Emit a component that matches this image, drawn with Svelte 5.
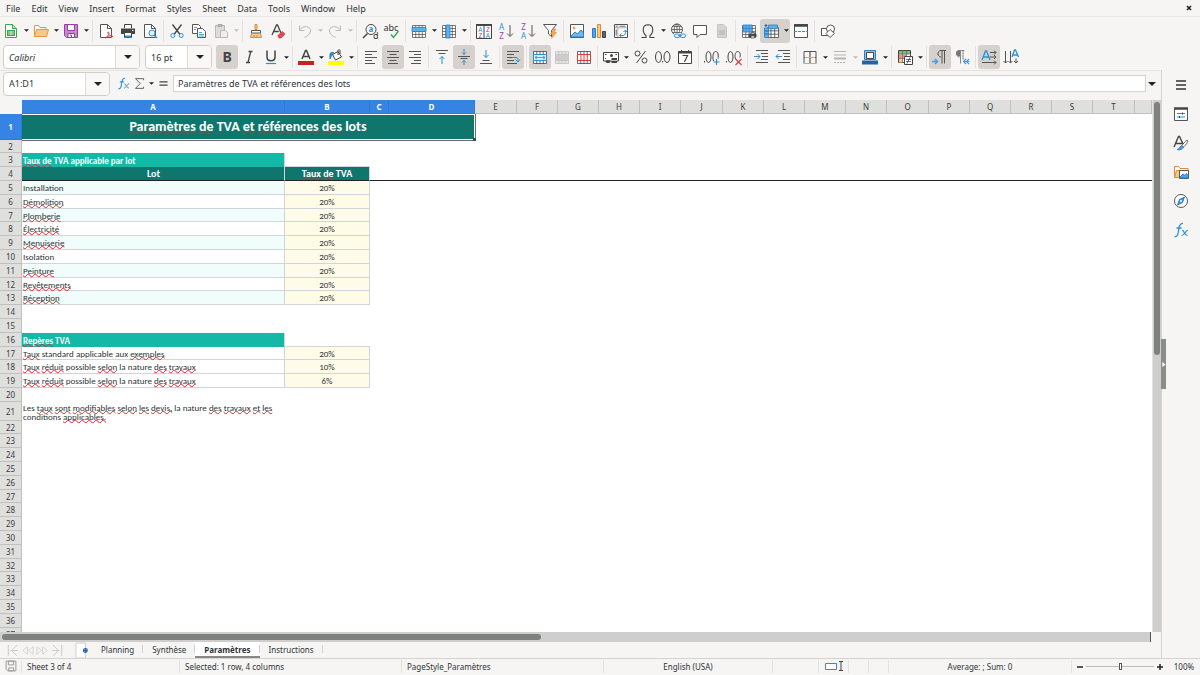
<script lang="ts">
	type Tool = { icon: string; label: string; menu?: boolean; active?: boolean; disabled?: boolean };
	type Row = { kind?: string; label?: string; rate?: string };

	const menus = ['File', 'Edit', 'View', 'Insert', 'Format', 'Styles', 'Sheet', 'Data', 'Tools', 'Window', 'Help'];

	const grid = 'M1.5 2.5h13v12h-13zM1.5 5.5h13M1.5 8.5h13M1.5 11.5h13M4.75 2.5v12M8 2.5v12M11.25 2.5v12';

	const icons: Record<string, string> = {
		new: '<path d="M2.5 1.5h7l4 4v9h-11z" fill="#fff" stroke="#3fa64b"/><path d="M9.5 1.5v4h4" fill="#b8e6bd" stroke="#3fa64b"/><path d="M4 7h8v6H4z" fill="#3fa64b"/><path d="M5 9h6M5 11h6M8 8v4" stroke="#fff" stroke-width=".7"/>',
		open: '<path d="M1.5 13.5v-11h4l1.5 2h6v2" fill="#fff" stroke="#e8973a"/><path d="M1.5 13.5l2-7h12l-2 7z" fill="#fbc983" stroke="#e8973a"/>',
		save: '<path d="M1.5 1.5h13v13h-11l-2-2z" fill="#c987d2" stroke="#963fa5"/><path d="M4.5 1.5h7v6h-7z" fill="#fff" stroke="#963fa5"/><path d="M5 10.5h6.5v4H5z" fill="#fff" stroke="#963fa5"/><path d="M7 12h1.5v2" stroke="#963fa5"/>',
		pdf: '<path d="M2.5 1.5h7l4 4v9h-11z" fill="#fff" stroke="#555"/><path d="M9.5 1.5v4h4" stroke="#555"/><path d="M7.5 15c3-2 4-5 3-6-1.5-.5-.5 4 4.5 4.5-3-1.500-6 0-7.500 1.500z" stroke="#e0404b"/>',
		print: '<path d="M4.5 5V1.5h7V5" fill="#fff" stroke="#444"/><path d="M1 5.5h14V11H1z" fill="#444"/><path d="M4.5 9.5h7v5h-7z" fill="#fff" stroke="#444"/><path d="M5 13.5h6" stroke="#2b8fd6" stroke-width="2"/><path d="M12 7.5h1.5" stroke="#fff"/>',
		preview: '<path d="M2.5 1.5h7l4 4v9h-11z" fill="#fff" stroke="#555"/><path d="M9.5 1.5v4h4" stroke="#555"/><circle cx="10" cy="10" r="3" fill="#dff0fb" stroke="#2b8fd6"/><path d="M12 12l3 3" stroke="#2b8fd6" stroke-width="1.4"/>',
		cut: '<path d="M3.5 1.5l7.5 10M12.5 1.5L5 11.5" stroke="#444" stroke-width="1.3"/><circle cx="3.8" cy="12.5" r="2" stroke="#2b8fd6"/><circle cx="12.2" cy="12.5" r="2" stroke="#2b8fd6"/>',
		copy: '<path d="M1.5 1.5h6l2 2v7h-8z" fill="#fff" stroke="#555"/><path d="M6.5 5.5h5l3 3v6h-8z" fill="#fff" stroke="#555"/><path d="M3 4.5h3M3 6.5h2M8 9.5h3M8 11.5h5M8 13h5" stroke="#2b8fd6" stroke-width=".8"/>',
		paste: '<path d="M2.5 2.5h9v12h-9z" fill="#ddd" stroke="#b8b8b8"/><path d="M5 1.5h4v2H5z" fill="#bbb" stroke="#aaa"/><path d="M7.5 7.5h5l2 2v5h-7z" fill="#eee" stroke="#b8b8b8"/>',
		clone: '<path d="M7 1.5h2V7H7z" fill="#fbc983" stroke="#e08a35"/><path d="M3.5 7.5h9V10h-9z" fill="#fff" stroke="#555"/><path d="M3.5 10.5h9l1 4h-11z" fill="#fbc983" stroke="#e08a35"/><path d="M6 12v2M9 12v2" stroke="#e08a35"/>',
		clear: '<path d="M2 12L6.5 2h1l3.5 8M3.8 8.5h5" stroke="#444" stroke-width="1.3"/><path d="M8 12.500l4-4 3 2.500-4 4H9z" fill="#e8474f" stroke="#c93640" stroke-width=".8"/>',
		undo: '<path d="M2.5 2.5v5h5M2.5 7C6 2 14 3 13.5 8c-.2 3-3 5-6 6.5" stroke="#b9b9b9"/>',
		redo: '<path d="M13.5 2.5v5h-5M13.5 7C10 2 2 3 2.5 8c.2 3 3 5 6 6.5" stroke="#b9b9b9"/>',
		find: '<circle cx="9" cy="6.5" r="5" fill="#fff" stroke="#444"/><path d="M5.5 10.5L1 15" stroke="#444" stroke-width="1.5"/><text x="6.5" y="9" font-size="8" font-weight="700" fill="#2b8fd6">a</text><text x="11" y="15.5" font-size="9" fill="#333">d</text>',
		spell: '<text x="-.5" y="8" font-size="9" fill="#333">abc</text><path d="M7 11.5l2.5 3 5-6.5" stroke="#2fa84f" stroke-width="1.4"/>',
		row: `<path d="${grid}" fill="#fff" stroke="#555" stroke-width=".8"/><path d="M1 4.5h14v4H1z" fill="#5fb0ec" stroke="#2b7fc6" stroke-width=".8"/>`,
		column: `<path d="${grid}" fill="#fff" stroke="#555" stroke-width=".8"/><path d="M5 2h4v13H5z" fill="#5fb0ec" stroke="#2b7fc6" stroke-width=".8"/>`,
		sort: '<path d="M.5 1.5h15v14H.5zM8 3v12" fill="#fff" stroke="#444"/><path d="M0 2h16" stroke="#444" stroke-width="2"/><g font-size="6.5"><text x="2.2" y="8.800" fill="#2b8fd6">A</text><text x="2.4" y="14.6" fill="#a03fa8">Z</text><text x="10" y="8.800" fill="#a03fa8">Z</text><text x="9.8" y="14.6" fill="#2b8fd6">A</text></g>',
		asc: '<g font-size="8"><text x="1" y="7" fill="#2b8fd6">A</text><text x="1.2" y="15.5" fill="#a03fa8">Z</text></g><path d="M12 2v11M9 10.5l3 3 3-3" stroke="#555"/>',
		desc: '<g font-size="8"><text x="1.2" y="7" fill="#a03fa8">Z</text><text x="1" y="15.5" fill="#2b8fd6">A</text></g><path d="M12 2v11M9 10.5l3 3 3-3" stroke="#555"/>',
		filter: '<path d="M1.5 1.5h13l-5 6v6l-3-2.5V7.5z" fill="#fff" stroke="#555"/><path d="M12 6L8.5 11H11l-1.5 4.5L14.5 9.5H12L14 6z" fill="#fba93f" stroke="#e08a35" stroke-width=".6"/>',
		image: '<path d="M1.5 1.5h13v13h-13z" fill="#fff" stroke="#555"/><circle cx="5" cy="5" r="1.5" fill="#f8a33c"/><path d="M2 13l4-4 2.5 2L12 7l2.5 3v4H2z" fill="#73b8ee" stroke="#2b7fc6"/>',
		chart: '<path d="M1.5 5.5h3v9h-3z" fill="#4fa5e6" stroke="#2b7fc6"/><path d="M6.5 1.5h3v13h-3z" fill="#fbc983" stroke="#e08a35"/><path d="M11.5 8.5h3v6h-3z" fill="#666" stroke="#444"/>',
		pivot: '<path d="M1.5 1.5h13v13h-13z" fill="#fff" stroke="#555"/><path d="M4.8 2v12M2 4.8h12" stroke="#999" stroke-width=".8"/><path d="M7 12.5h3c2 0 2.500-2 2.500-5M10.500 9l2-2 1.500 2M8.500 10.500L6.500 12.500l2 1.500" stroke="#2b8fd6"/><path d="M2.500 3.200h1.500M6.500 3.200h6M3.200 6.500v6" stroke="#666"/>',
		omega: '<path d="M1.5 14.5H6v-2C2.500 10 1.500 2 8 1.800c6.500.2 5.500 8.200 2 10.700v2h4.500" stroke="#444" stroke-width="1.1"/>',
		link: '<circle cx="7" cy="6.5" r="5.5" stroke="#555"/><path d="M1.5 6.5h11M7 1v11M2.5 3.5h9M2.5 9.5h9" stroke="#555" stroke-width=".8"/><ellipse cx="7" cy="6.5" rx="2.7" ry="5.5" stroke="#555" stroke-width=".8"/><path d="M4 10h12v5.5H4z" fill="#f6f5f4"/><rect x="4.5" y="11" width="5.5" height="3.5" rx="1.7" stroke="#2b8fd6"/><rect x="10" y="11" width="5.5" height="3.5" rx="1.7" stroke="#2b8fd6"/><path d="M8 12.7h4" stroke="#2b8fd6"/>',
		comment: '<path d="M1.5 2.5h13v9H8l-3 3v-3H1.5z" fill="#fff" stroke="#555"/>',
		headers: '<path d="M3.5 1.5h6l3 3v10h-9z" fill="#d4d4d4" stroke="#c4c4c4"/><path d="M5 7h6v5H5z" fill="#c2c2c2"/>',
		printarea: `<path d="${grid}" fill="#fff" stroke="#555" stroke-width=".8"/><path d="M2 2h9v7H2z" fill="#5fb0ec" stroke="#2b7fc6" stroke-width=".8"/><path d="M2 5.5h9M5 2v7M8 2v7" stroke="#2b7fc6" stroke-width=".7"/><path d="M8 11h7v3H8z" fill="#555" stroke="#333" stroke-width=".8"/><path d="M10 9.5h3.5V11H10zM10 13h3.5v2H10z" fill="#fff" stroke="#444" stroke-width=".7"/>`,
		freeze: '<path d="M4.5 4.5h11v10h-11zM4.5 7.8h11M4.5 11.2h11M8 4.5v10M11.7 4.5v10" fill="#fff" stroke="#444" stroke-width=".8"/><path d="M1.5 5h4v9.5h-4zM5.5 2h9v3.5h-9z" fill="#5fb0ec" stroke="#2b7fc6" stroke-width=".8"/><path d="M3 1v3M1.5 2.5h3M1.5 8h4M1.5 11h4" stroke="#1769aa"/>',
		split: '<path d="M1.5 1.5h13v13h-13z" fill="#fff" stroke="#555"/><path d="M1 2.5h14" stroke="#444" stroke-width="2.5"/><path d="M1 8.5h14" stroke="#2b8fd6" stroke-dasharray="3 1"/>',
		shapes: '<path d="M1.5 5.5h8v7h-8z" fill="#fff" stroke="#555"/><circle cx="10.5" cy="6" r="4" fill="#fff" stroke="#555"/><path d="M10 6.5l4.5 4-4.5 4-4-4z" fill="#fff" stroke="#555"/>',
		bold: '<text x="3.5" y="13" font-size="14" font-weight="700" fill="#444">B</text>',
		italic: '<path d="M7.500 2.500h4M5 13.500h4M9.700 2.500l-2.700 11" stroke="#444" stroke-width="1.3"/>',
		underline: '<path d="M4 1.5V8c0 5 8 5 8 0V1.5" stroke="#444" stroke-width="1.5"/><path d="M3 14.5h10" stroke="#2b8fd6" stroke-width="1.2"/>',
		fontcolor: '<path d="M4 10l3.500-8.500h1L12 10M5.200 7.500h5.600" stroke="#444" stroke-width="1.5"/><path d="M0 12h16v4H0z" fill="#c9211e"/>',
		highlight: '<path d="M4.500 5.500l5.500-3 3.500 5.500-6 3z" fill="#fff" stroke="#444"/><path d="M10 6V1.500c0-1 2-1 2 0V5" stroke="#444"/><path d="M2 10V4.500c1-1 2.500-1.500 4-.5-1.500.5-2.500 2.500-4 6z" fill="#2b8fd6" stroke="#2b7fc6"/><path d="M0 12h16v4H0z" fill="#ffff00"/>',
		left: '<path d="M2 2.5h12M2 5.5h7M2 8.5h12M2 11.5h7M2 14.5h10" stroke="#555"/>',
		center: '<path d="M2 2.5h12M4.5 5.5h7M2 8.5h12M4.5 11.5h7M3 14.5h10" stroke="#555"/>',
		right: '<path d="M2 2.5h12M7 5.5h7M2 8.5h12M7 11.5h7M4 14.5h10" stroke="#555"/>',
		top: '<path d="M2 1.5h12M4.5 4.5h7" stroke="#555"/><path d="M8 15V7.5M5.5 10L8 7.5l2.5 2.5" stroke="#2b8fd6"/>',
		middle: '<path d="M2 7.5h12M4.5 9.5h7" stroke="#555"/><path d="M8 0v5.5M6 3.5l2 2 2-2M8 16v-4.5M6 13.5l2-2 2 2" stroke="#2b8fd6"/>',
		bottom: '<path d="M4.5 11.5h7M2 14.5h12" stroke="#555"/><path d="M8 1v7.5M5.5 6L8 8.5 10.5 6" stroke="#2b8fd6"/>',
		wrap: '<path d="M2 2.5h12M2 5.5h7M2 8.5h5M2 11.5h7M2 14.5h10" stroke="#555"/><path d="M7 8.5h4c2 0 2 1 2 3.5M10.5 10.5l2.5 2.5 2-2.5" stroke="#2b8fd6"/>',
		merge: `<path d="${grid}" fill="#fff" stroke="#444" stroke-width=".8"/><path d="M1.5 5.5h13v6h-13z" fill="#d7ecfb" stroke="#2b8fd6"/><path d="M3 8.5h10M5 7L3 8.5 5 10M11 7l2 1.5-2 1.5" stroke="#2b8fd6" stroke-width=".8"/>`,
		mergeoff: `<path d="${grid}" fill="#e6e6e6" stroke="#c0c0c0" stroke-width=".8"/><path d="M2 6h12v5H2z" fill="#ccc"/>`,
		unmerge: `<path d="${grid}" fill="#fff" stroke="#444" stroke-width=".8"/><path d="M1.5 5.5h13v6h-13zM5 5.5v6M8 5.5v6M11.3 5.5v6" fill="#fff" stroke="#dd3b40"/>`,
		currency: '<path d="M.5 3.500h15v8.500H.5z" fill="#fff" stroke="#444"/><circle cx="8.500" cy="6.500" r="1.500" fill="#444"/><path d="M2 5.500h1.500M12.500 5.500h1.500M2 9.500h1" stroke="#444"/><ellipse cx="5" cy="12.500" rx="2.500" ry="1.500" fill="#444"/><path d="M8.500 9h5.500v5H8.500z" fill="#444"/><path d="M8.500 11.500H14" stroke="#fff" stroke-width=".7"/>',
		percent: '<circle cx="4.5" cy="4.5" r="2.5" stroke="#444"/><circle cx="11.5" cy="11.5" r="2.5" stroke="#444"/><path d="M12.5 2l-9 12" stroke="#444"/>',
		number: '<ellipse cx="3.5" cy="8" rx="3" ry="5.5" stroke="#444"/><ellipse cx="12" cy="8" rx="3" ry="5.5" stroke="#444"/><path d="M7.700 12v1.500" stroke="#444"/>',
		date: '<path d="M1.5 2.5h13v12h-13z" fill="#fff" stroke="#444"/><path d="M1.5 3.5h13" stroke="#444" stroke-width="2"/><path d="M4.5 1v3M11.5 1v3" stroke="#444"/><path d="M5.5 6.5h5L7.5 13" stroke="#444" stroke-width="1.2"/>',
		adddec: '<path d="M.5 12v1.5" stroke="#444"/><ellipse cx="4.5" cy="8" rx="2.5" ry="5.5" stroke="#444"/><path d="M9.500 12c-1-3-1-9 2-9.500 3 0 3 4 2.500 7" stroke="#444"/><path d="M12.5 10v6M9.5 13h6" stroke="#2b8fd6" stroke-width="1.2"/>',
		deldec: '<path d="M.5 12v1.5" stroke="#444"/><ellipse cx="4.5" cy="8" rx="2.5" ry="5.5" stroke="#444"/><path d="M9.500 10c-1-3-.5-7 2-7.500 3 0 3 4 2.500 6" stroke="#444"/><path d="M9.5 10l6 6M15.5 10l-6 6" stroke="#dd3b40" stroke-width="1.2"/>',
		indent: '<path d="M3 1.5h12M8 4.5h7M9 7.5h6M8 10.5h7M3 13.5h12" stroke="#555"/><path d="M1 7.5h6M4.5 5L7 7.5 4.5 10" stroke="#2b8fd6"/>',
		outdent: '<path d="M3 1.5h12M8 4.5h7M9 7.5h6M8 10.5h7M3 13.5h12" stroke="#555"/><path d="M1 7.5h6M3.5 5L1 7.5 3.5 10" stroke="#2b8fd6"/>',
		borders: '<path d="M8 2.500v12M2 8.500h12M2 14.500h12" stroke="#e8a45c"/><path d="M2 14.500v-12h12v12M8 3v11M2 8.500h12" stroke="#555"/><path d="M3 8.500h10M2 14.500h12" stroke="#e8a45c"/>',
		linestyle: '<path d="M2 2.5h12M2 6h12" stroke="#b5b5b5"/><path d="M2 9.5h12" stroke="#b5b5b5" stroke-width="2"/><path d="M2 13.5h12" stroke="#b5b5b5" stroke-dasharray="2 1"/>',
		bordercolor: '<path d="M2.5 1.5h11v9h-11z" fill="#8cc4f0" stroke="#2b7fc6"/><path d="M4.5 3.5h7v6h-7z" fill="#fff" stroke="#444"/><path d="M0 11.5h16v4H0z" fill="#2165a8"/>',
		conditional: '<path d="M1.5 1.5h12v12h-12z" fill="#fff" stroke="#444"/><path d="M2 2h11v3H2z" fill="#6cc878"/><path d="M2 5.5h3.5v4H2zM6 5.5h3.5v4H6z" fill="#f28a80"/><path d="M2 10h3.5v3.5H2z" fill="#fbc983"/><path d="M1.5 5h12M1.5 9.5h12M5.5 1.5v12M9.5 1.5v12" stroke="#666" stroke-width=".7"/><path d="M7.5 7.5h8v8h-8z" fill="#fff" stroke="#444"/><path d="M9 10.5h5M9 12.5h5M13 8.5l-3 6" stroke="#444" stroke-width=".8"/>',
		ltr: '<path d="M14 1.500H9c-4 0-4 6.500 0 6.500M10 1.500v13M12.500 1.500v13" stroke="#555"/><path d="M6.800 3c-1 1-1 3 0 4" stroke="#777"/><path d="M0 12.500h5M3 10l2.500 2.500L3 15" stroke="#4a9be8" stroke-width="1.5"/>',
		rtl: '<path d="M10.5 1.5h-5c-4 0-4 6.5 0 6.5M6.5 1.5v13M9 1.5v9" stroke="#888"/><path d="M2 4c0-2 2-3 4-2.500v6C4 7.500 2 6 2 4z" fill="#777"/><path d="M10 12.5h5.5M12 10l-2.5 2.5L12 15M15 10l-2.5 2.5L15 15" stroke="#4a9be8" stroke-width="1.2"/>',
		horizontal: '<path d="M1 11L4.5 2h1L9 11M2.3 8h5.4" stroke="#2b8fd6" stroke-width="1.3"/><path d="M9 3.5h6M9 8h6M1 13.5h14M13 1.5l2 2-2 2M13 6l2 2-2 2M13 11.5l2 2-2 2" stroke="#555"/>',
		vertical: '<path d="M9 8L11.5 1h1L15.5 8M10 6h4.5" stroke="#2b8fd6" stroke-width="1.3"/><path d="M2.5 2v12M7.5 2v12M13 9.5V14M.5 12l2 2 2-2M5.5 12l2 2 2-2M11 12l2 2 2-2" stroke="#555"/>',
		menu: '<path d="M3 4h10M3 8h10M3 12h10" stroke="#333" stroke-width="1.5"/>',
		properties: '<path d="M1.5 2.5h13v12h-13z" fill="#fff" stroke="#555"/><path d="M1 2.5h14" stroke="#444" stroke-width="2.5"/><path d="M4 7.500h8M4 11h8" stroke="#2b8fd6"/><path d="M9.500 6.500v2M6.500 10v2" stroke="#444"/>',
		styles: '<path d="M1 12L5.5 1.5h1L10 9M3 8.5h6" stroke="#444" stroke-width="1.4"/><path d="M14.5 5.5c1 1-2 5-4.5 7l-1.500-1.500c2-2.500 5-6.500 6-5.500z" fill="#fff" stroke="#555"/><path d="M4 14.500c3 0 2-3 4.500-3.500 1.500 0 2 1.500 1 2.500-1.500 1.500-4 1.500-5.500 1z" fill="#4fa5e6" stroke="#2b7fc6"/>',
		gallery: '<path d="M1.5 13.5v-11h4l1.5 2h8v3" fill="#fff" stroke="#e08a35"/><path d="M1.5 13.5l2-7h3v7z" fill="#fbc983" stroke="#e08a35"/><path d="M6.5 6.5h9v8h-9z" fill="#fff" stroke="#555"/><path d="M7 13l3-3 2 1.500 1.500-2 1.500 2V14H7z" fill="#4fa5e6" stroke="#2b7fc6"/>',
		navigator: '<circle cx="8" cy="8" r="6.5" fill="#fff" stroke="#555"/><path d="M11.500 4L9.500 9.500 4.500 12l2-5.500z" fill="#3d9be0" stroke="#1769aa" stroke-width=".8"/><circle cx="8" cy="8" r="1" fill="#fff"/>',
		fx: '<path d="M1.5 14.5c3 .5 3.5-2 4-5.5C6 5.500 6.500 1 10 1.500M3.500 6h5" stroke="#2b8fd6" stroke-width="1.3"/><path d="M9 8.500c2-1 2.500 5.500 5.500 5M15 8.500c-2-1-4 5.500-6.500 5" stroke="#2b8fd6" stroke-width="1.2"/>',
		sum: '<path d="M13 4V2H3l6 6-6 6h10v-2" stroke="#555" stroke-width="1.1"/>',
		equals: '<path d="M3 6h10M3 10h10" stroke="#444" stroke-width="1.8"/>',
		first: '<path d="M3.5 2v12M13 2L7 8l6 6M6 8h8" stroke="#c8c8c8"/>',
		prev: '<path d="M8 4L3 8l5 4zM14 4L9 8l5 4z" stroke="#d2d2d2"/>',
		next: '<path d="M2 4l5 4-5 4zM8 4l5 4-5 4z" stroke="#d2d2d2"/>',
		last: '<path d="M12.5 2v12M3 2l6 6-6 6M2 8h8" stroke="#c8c8c8"/>',
		addsheet: '<path d="M0 0h10v16H0z" fill="#fff" stroke="#ccc"/><circle cx="10" cy="8" r="2" fill="#fff" stroke="#1b5fae" stroke-width="1.2"/><path d="M10 6v4M8 8h4" stroke="#1b5fae"/>',
		disk: '<path d="M1.5 1.5h13v13h-11l-2-2zM4.5 1.5h7v5h-7zM5 10.5h6.5v4H5z" stroke="#999" stroke-width="1.3"/>'
	};

	const t = (icon: string, label: string, rest: Partial<Tool> = {}): Tool => ({ icon, label, ...rest });
	const menu = { menu: true };
	const active = { active: true };

	const standardBar: Tool[][] = [
		[t('new', 'New', menu), t('open', 'Open', menu), t('save', 'Save', menu)],
		[t('pdf', 'Export as PDF'), t('print', 'Print'), t('preview', 'Print Preview')],
		[t('cut', 'Cut'), t('copy', 'Copy'), t('paste', 'Paste', { menu: true, disabled: true })],
		[t('clone', 'Clone Formatting'), t('clear', 'Clear Formatting')],
		[t('undo', 'Undo', { menu: true, disabled: true }), t('redo', 'Redo', { menu: true, disabled: true })],
		[t('find', 'Find and Replace'), t('spell', 'Spelling')],
		[t('row', 'Row', menu), t('column', 'Column', menu)],
		[t('sort', 'Sort'), t('asc', 'Sort Ascending'), t('desc', 'Sort Descending'), t('filter', 'AutoFilter')],
		[t('image', 'Insert Image'), t('chart', 'Insert Chart'), t('pivot', 'Pivot Table')],
		[t('omega', 'Special Character', menu), t('link', 'Hyperlink'), t('comment', 'Comment'), t('headers', 'Headers and Footers', { disabled: true })],
		[t('printarea', 'Define Print Area'), t('freeze', 'Freeze Rows and Columns', { menu: true, active: true }), t('split', 'Split Window')],
		[t('shapes', 'Draw Functions')]
	];

	const formatBar: Tool[][] = [
		[t('bold', 'Bold', active), t('italic', 'Italic'), t('underline', 'Underline', menu)],
		[t('fontcolor', 'Font Color', menu), t('highlight', 'Background Color', menu)],
		[t('left', 'Align Left'), t('center', 'Center Horizontally', active), t('right', 'Align Right')],
		[t('top', 'Align Top'), t('middle', 'Center Vertically', active), t('bottom', 'Align Bottom')],
		[t('wrap', 'Wrap Text', active)],
		[t('merge', 'Merge and Center', active), t('mergeoff', 'Merge Cells', { disabled: true }), t('unmerge', 'Unmerge Cells')],
		[t('currency', 'Currency', menu), t('percent', 'Percent'), t('number', 'Number'), t('date', 'Date')],
		[t('adddec', 'Add Decimal Place'), t('deldec', 'Delete Decimal Place')],
		[t('indent', 'Increase Indent'), t('outdent', 'Decrease Indent')],
		[t('borders', 'Borders', menu), t('linestyle', 'Border Style', { menu: true, disabled: true }), t('bordercolor', 'Border Color', menu)],
		[t('conditional', 'Conditional', menu)],
		[t('ltr', 'Left-To-Right', active), t('rtl', 'Right-To-Left')],
		[t('horizontal', 'Text Horizontal', active), t('vertical', 'Text Vertical')]
	];

	const panels: Tool[] = [
		t('menu', 'Sidebar Settings'),
		t('properties', 'Properties'),
		t('styles', 'Styles'),
		t('gallery', 'Gallery'),
		t('navigator', 'Navigator'),
		t('fx', 'Functions')
	];

	const columns = 'ABCDEFGHIJKLMNOPQRSTU'.split('');
	const lots = ['Installation', 'Démolition', 'Plomberie', 'Électricité', 'Menuiserie', 'Isolation', 'Peinture', 'Revêtements', 'Réception'];

	const cells: Record<number, Row> = {
		3: { kind: 'section', label: 'Taux de TVA applicable par lot' },
		4: { kind: 'heading', label: 'Lot', rate: 'Taux de TVA' },
		16: { kind: 'section', label: 'Repères TVA' },
		17: { kind: 'item', label: 'Taux standard applicable aux exemples', rate: '20%' },
		18: { kind: 'item', label: 'Taux réduit possible selon la nature des travaux', rate: '10%' },
		19: { kind: 'item', label: 'Taux réduit possible selon la nature des travaux', rate: '6%' },
		21: { kind: 'note', label: 'Les taux sont modifiables selon les devis, la nature des travaux et les conditions applicables.' }
	};
	lots.forEach((label, i) => {
		cells[5 + i] = { kind: i % 2 ? 'item' : 'item banded', label, rate: '20%' };
	});

	const rows = Array.from({ length: 36 }, (_, i) => i + 2);

	const unknownWords = new Set(
		'paramètres de et références des taux démolition plomberie électricité menuiserie peinture revêtements réception repères exemples réduit selon travaux sont modifiables devis applicables'.split(' ')
	);
	const isUnknown = (word: string) => word === 'les' || unknownWords.has(word.toLowerCase().replace(/[.,]/g, ''));

	const sheets = ['Planning', 'Synthèse', 'Paramètres', 'Instructions'];
	let currentSheet = $state('Paramètres');
	let zoom = $state(100);
	let formula = $state('Paramètres de TVA et références des lots');
</script>

{#snippet icon(name: string)}
	<svg class="icon" viewBox="0 0 16 16" fill="none" aria-hidden="true">{@html icons[name]}</svg>
{/snippet}

{#snippet arrow()}
	<svg class="arrow" viewBox="0 0 8 4" aria-hidden="true"><path d="M0 0h8L4 4z" fill="currentColor" /></svg>
{/snippet}

{#snippet toolGroups(groups: Tool[][])}
	{#each groups as group}
		<div class="group">
			{#each group as tool}
				<div class="tool" class:active={tool.active}>
					<button class="tool-button" aria-label={tool.label} disabled={tool.disabled}>{@render icon(tool.icon)}</button>
					{#if tool.menu}
						<button class="tool-menu" aria-label="{tool.label} options" disabled={tool.disabled}>{@render arrow()}</button>
					{/if}
				</div>
			{/each}
		</div>
	{/each}
{/snippet}

{#snippet spelled(text: string)}
	{#each text.split(' ') as word, i}{i ? ' ' : ''}{#if isUnknown(word)}<span class="unknown">{word}</span>{:else}{word}{/if}{/each}
{/snippet}

{#snippet combo(label: string, value: string, name: string)}
	<div class="combo {name}">
		<input aria-label={label} {value} />
		<button aria-label="{label} list">{@render arrow()}</button>
	</div>
{/snippet}

<div class="window">
	<nav class="menubar">
		{#each menus as item}
			<button>{item}</button>
		{/each}
		<button class="close" aria-label="Close document">
			<svg viewBox="0 0 6 6" aria-hidden="true"><path d="M1 1l4 4M5 1L1 5" stroke="#222" stroke-width="1.6" /></svg>
		</button>
	</nav>

	<div class="toolbar">{@render toolGroups(standardBar)}</div>
	<div class="toolbar format">
		{@render combo('Font Name', 'Calibri', 'font-name')}
		{@render combo('Font Size', '16 pt', 'font-size')}
		{@render toolGroups(formatBar)}
	</div>

	<div class="workspace">
		<main>
			<div class="formula-bar">
				{@render combo('Name Box', 'A1:D1', 'name-box')}
				<button class="function" aria-label="Function Wizard">{@render icon('fx')}</button>
				<button class="sum" aria-label="Select Function">{@render icon('sum')}{@render arrow()}</button>
				<button class="function" aria-label="Formula">{@render icon('equals')}</button>
				<input class="formula" aria-label="Input line" bind:value={formula} />
				<button class="expand" aria-label="Expand Formula Bar">{@render arrow()}</button>
			</div>

			<div class="sheet-area">
				<div class="sheet">
					<table>
						<colgroup>
							<col class="numbers" />
							{#each columns as column}
								<col class={['A', 'B', 'C', 'D', 'U'].includes(column) ? `col-${column}` : 'col'} />
							{/each}
						</colgroup>
						<thead>
							<tr>
								<td class="corner"></td>
								{#each columns as column, i}
									<th class:selected={i < 4} scope="col">{column === 'U' ? '' : column}</th>
								{/each}
							</tr>
						</thead>
						<tbody>
							<tr class="title-row">
								<th class="selected" scope="row">1</th>
								<td class="title" colspan="4">{@render spelled('Paramètres de TVA et références des lots')}</td>
								<td colspan="17"></td>
							</tr>
							{#each rows as n}
								{@const row = cells[n]}
								<tr class={row?.kind}>
									<th scope="row">{n}</th>
									<td class="label">{#if row?.label}{@render spelled(row.label)}{/if}</td>
									<td class="rate">{#if row?.rate}{@render spelled(row.rate)}{/if}</td>
									<td colspan="19"></td>
								</tr>
							{/each}
						</tbody>
					</table>
				</div>
				<div class="scroll-y"><div class="thumb"></div></div>
			</div>
			<div class="scroll-x"><div class="thumb"></div></div>

			<div class="tabs">
				<div class="tab-nav">
					{#each ['first', 'prev', 'next', 'last'] as name}
						<button aria-label="{name} sheet" disabled>{@render icon(name)}</button>
					{/each}
				</div>
				<button class="add-sheet" aria-label="Add Sheet">{@render icon('addsheet')}</button>
				{#each sheets as sheet}
					<button class="tab" class:current={sheet === currentSheet} onclick={() => (currentSheet = sheet)}>{sheet}</button>
				{/each}
			</div>
		</main>

		<aside>
			<button class="handle" aria-label="Hide sidebar">
				<svg viewBox="0 0 4 6" aria-hidden="true"><path d="M0 0l4 3-4 3z" fill="#fff" /></svg>
			</button>
			{#each panels as panel}
				<button class="panel" aria-label={panel.label}>{@render icon(panel.icon)}</button>
			{/each}
		</aside>
	</div>

	<footer>
		<span class="disk">{@render icon('disk')}</span>
		<span>Sheet {sheets.indexOf(currentSheet) + 1} of 4</span>
		<span>Selected: 1 row, 4 columns</span>
		<span>PageStyle_Paramètres</span>
		<span class="middle">English (USA)</span>
		<span></span>
		<span class="mode">
			<svg viewBox="0 0 20 12" fill="none" aria-hidden="true">
				<path d="M1.5 3.5h11v6h-11z" stroke="#2b8fd6" fill="#fff" />
				<path d="M15 1.5h4M17 1.5v9M15 10.5h4" stroke="#444" />
			</svg>
		</span>
		<span></span>
		<span></span>
		<span class="middle">Average: ; Sum: 0</span>
		<div class="zoom">
			<button aria-label="Zoom Out" onclick={() => (zoom -= 5)}>
				<svg viewBox="0 0 8 8"><path d="M1 4h6" stroke="#222" stroke-width="1.5" /></svg>
			</button>
			<input type="range" min="20" max="180" bind:value={zoom} aria-label="Zoom" />
			<button aria-label="Zoom In" onclick={() => (zoom += 5)}>
				<svg viewBox="0 0 8 8"><path d="M1 4h6M4 1v6" stroke="#222" stroke-width="1.5" /></svg>
			</button>
		</div>
		<span class="middle">{zoom}%</span>
	</footer>
</div>

<style>
	:global(body) {
		margin: 0;
	}

	.window {
		--bg: #f6f5f4;
		--line: #d5d3d0;
		--active: #d5d1cd;
		display: flex;
		flex-direction: column;
		height: 100vh;
		overflow: hidden;
		background: var(--bg);
		color: #2e3436;
		font-family: 'Noto Sans', sans-serif;
		font-size: 8px;
	}

	button,
	input {
		box-sizing: border-box;
		margin: 0;
		padding: 0;
		border: 0;
		background: none;
		color: inherit;
		font: inherit;
		min-width: 0;
	}

	button {
		display: flex;
		align-items: center;
		justify-content: center;
	}

	.icon {
		width: 16px;
		height: 16px;
		flex-shrink: 0;
		overflow: visible;
		font-family: 'Noto Sans', sans-serif;
	}

	.arrow {
		width: 5px;
		height: 3px;
		flex-shrink: 0;
		color: #222;
	}

	.menubar {
		display: flex;
		align-items: center;
		gap: 11px;
		height: 17px;
		padding: 0 6px;
		font-size: 9px;
		border-bottom: 1px solid #eae8e6;
		box-sizing: border-box;
		flex-shrink: 0;
	}

	.close {
		margin-left: auto;
		width: 10px;
	}

	.close svg {
		width: 6px;
		height: 6px;
	}

	.toolbar {
		display: flex;
		align-items: center;
		height: 27px;
		flex-shrink: 0;
	}

	.format {
		height: 26px;
		padding-left: 3px;
	}

	.group {
		display: flex;
		align-items: center;
	}

	.group + .group::before {
		content: '';
		width: 1px;
		height: 22px;
		margin: 0 2px;
		background: #e3e1df;
	}

	.tool {
		display: flex;
		height: 24px;
		border-radius: 3px;
	}

	.tool.active {
		background: var(--active);
	}

	.tool-button {
		width: 22px;
	}

	.tool-menu {
		width: 8px;
	}

	.tool-menu:disabled .arrow {
		color: #bbb;
	}

	.combo {
		display: flex;
		height: 24px;
		box-sizing: border-box;
		border: 1px solid #d0ccc8;
		border-radius: 4px;
		background: #fff;
		overflow: hidden;
		flex-shrink: 0;
		font-size: 9px;
	}

	.combo input {
		flex: 1;
		padding-left: 5px;
	}

	.combo button {
		width: 24px;
		border-left: 1px solid #dedbd8;
		background: #f9f8f7;
	}

	.combo .arrow,
	.expand .arrow {
		width: 8px;
		height: 4px;
	}

	.font-name {
		width: 137px;
		margin-right: 5px;
		font-style: italic;
	}

	.font-size {
		width: 67px;
		margin-right: 4px;
	}

	.name-box {
		width: 107px;
		margin-right: 5px;
	}

	.workspace {
		display: flex;
		flex: 1;
		min-height: 0;
	}

	main {
		display: flex;
		flex-direction: column;
		flex: 1;
		min-width: 0;
	}

	.formula-bar {
		display: flex;
		align-items: center;
		height: 30px;
		padding: 0 4px 4px 3px;
		box-sizing: border-box;
		flex-shrink: 0;
		border-top: 1px solid #e6e4e2;
	}

	.function {
		width: 16px;
	}

	.function .icon,
	.sum .icon {
		width: 13px;
		height: 13px;
	}

	.sum {
		gap: 3px;
		width: 24px;
	}

	.formula {
		flex: 1;
		height: 17px;
		margin-left: 2px;
		padding: 0 4px;
		border: 1px solid var(--line);
		background: #fff;
		font-size: 9px;
	}

	.expand {
		width: 11px;
	}

	.sheet-area {
		display: flex;
		flex: 1;
		min-height: 0;
	}

	.sheet {
		flex: 1;
		min-width: 0;
		overflow: hidden;
		background: #fff;
	}

	table {
		width: 100%;
		table-layout: fixed;
		border-collapse: separate;
		border-spacing: 0;
		line-height: 9px;
	}

	.numbers {
		width: 22px;
	}

	.col-A {
		width: 263px;
	}

	.col-B {
		width: 85px;
	}

	.col-C {
		width: 19px;
	}

	.col-D {
		width: 86px;
	}

	.col {
		width: 41px;
	}

	.col:nth-child(5n + 1) {
		width: 42px;
	}

	tr {
		height: 14px;
	}

	tbody tr:nth-child(5n + 2) {
		height: 13px;
	}

	th,
	td {
		box-sizing: border-box;
		padding: 0;
		white-space: nowrap;
	}

	th {
		background: #dfdfde;
		border-right: 1px solid #c0c0c0;
		border-bottom: 1px solid #c0c0c0;
		font-weight: 400;
		text-align: center;
		color: #3c3c3c;
	}

	.corner {
		background: var(--bg);
	}

	th.selected {
		background: #3584e4;
		border-color: #3079d3;
		color: #fff;
		font-weight: 700;
	}

	tbody td {
		font-family: Carlito, Lato, sans-serif;
		font-size: 9px;
	}

	.title-row {
		height: 26px;
	}

	.title {
		position: relative;
		background: #0f766e;
		border: 1px solid #fff;
		border-left: 0;
		box-shadow: 0 1px 0 #6b6b6b, 1px 0 0 #6b6b6b;
		color: #fff;
		font-size: 14px;
		font-weight: 700;
		line-height: 18px;
		text-align: center;
	}

	.title::after {
		content: '';
		position: absolute;
		right: -2px;
		bottom: -2px;
		width: 3px;
		height: 3px;
		background: #444;
	}

	.label {
		padding-left: 1px;
	}

	.section .label {
		background: #14b8a6;
		border-right: 1px solid #d1d5db;
		color: #fff;
		font-weight: 700;
	}

	.section .rate {
		border-bottom: 1px solid #d1d5db;
	}

	.heading td {
		border-bottom: 1px solid #222;
	}

	.heading .label,
	.heading .rate {
		background: #0f766e;
		border-right: 1px solid #d1d5db;
		color: #fff;
		font-size: 10px;
		font-weight: 700;
		text-align: center;
	}

	.item .label,
	.item .rate {
		border-right: 1px solid #d1d5db;
		border-bottom: 1px solid #d1d5db;
	}

	.item .rate {
		background: #fefbe9;
		text-align: center;
	}

	.banded .label {
		background: #f0fdfa;
	}

	.note {
		height: 19px;
	}

	.note .label {
		white-space: normal;
		padding-right: 4px;
	}

	.unknown {
		text-decoration: underline wavy #e0242b 1px;
		text-decoration-skip-ink: none;
		text-underline-offset: -1px;
	}

	.scroll-y {
		width: 9px;
		padding: 2px 1px;
		background: #cecece;
		border-left: 1px solid #e2e2e2;
		box-sizing: border-box;
	}

	.thumb {
		border-radius: 3px;
		background: #7f817f;
	}

	.scroll-y .thumb {
		height: 48%;
	}

	.scroll-x {
		height: 10px;
		margin-right: 10px;
		padding: 2px;
		background: #cecece;
		box-sizing: border-box;
		border-right: 1px solid #555;
		flex-shrink: 0;
	}

	.scroll-x .thumb {
		width: 47%;
		height: 6px;
	}

	.tabs {
		display: flex;
		height: 16px;
		padding-left: 5px;
		flex-shrink: 0;
	}

	.tab-nav {
		display: flex;
		width: 69px;
	}

	.tab-nav button {
		width: 15px;
	}

	.tab-nav .icon,
	.add-sheet .icon {
		width: 15px;
		height: 15px;
	}

	.add-sheet {
		width: 18px;
	}

	.tab {
		position: relative;
		padding: 0 9px;
		border-bottom: 2px solid transparent;
	}

	.tab::after {
		content: '';
		position: absolute;
		right: 0;
		top: 3px;
		height: 8px;
		border-right: 1px solid var(--line);
	}

	.tab.current {
		background: #fff;
		border-color: #888;
		font-weight: 700;
	}

	aside {
		position: relative;
		display: flex;
		flex-direction: column;
		width: 39px;
		box-sizing: border-box;
		border-left: 1px solid var(--line);
	}

	.panel {
		height: 29px;
	}

	.handle {
		position: absolute;
		left: -1px;
		top: calc(50% - 25px);
		width: 5px;
		height: 50px;
		background: #8b8d8b;
	}

	.handle svg {
		width: 4px;
		height: 5px;
		flex-shrink: 0;
	}

	footer {
		display: grid;
		grid-template-columns: 22px 158fr 222fr 202fr 169fr 46fr 30px 20px 20px 183fr 96px 32px;
		align-items: center;
		height: 17px;
		padding-bottom: 1px;
		box-sizing: border-box;
		border-top: 1px solid var(--line);
		flex-shrink: 0;
	}

	footer > span {
		height: 13px;
		padding-left: 5px;
		line-height: 13px;
		border-right: 1px solid #e3e1df;
		box-sizing: border-box;
		white-space: nowrap;
	}

	footer > .middle {
		padding: 0;
		text-align: center;
	}

	footer > span:last-child {
		border: 0;
	}

	.disk .icon {
		width: 12px;
		height: 12px;
	}

	.mode svg {
		width: 20px;
		height: 12px;
	}

	.zoom {
		display: flex;
		align-items: center;
		gap: 2px;
		padding: 0 4px;
	}

	.zoom button svg {
		width: 8px;
		height: 8px;
	}

	.zoom input {
		appearance: none;
		flex: 1;
		height: 8px;
		background: linear-gradient(#bbb, #bbb) center / 100% 1px no-repeat;
	}

	.zoom input::-webkit-slider-thumb {
		appearance: none;
		width: 3px;
		height: 7px;
		border: 1px solid #555;
		background: #fff;
		box-sizing: border-box;
	}
</style>
